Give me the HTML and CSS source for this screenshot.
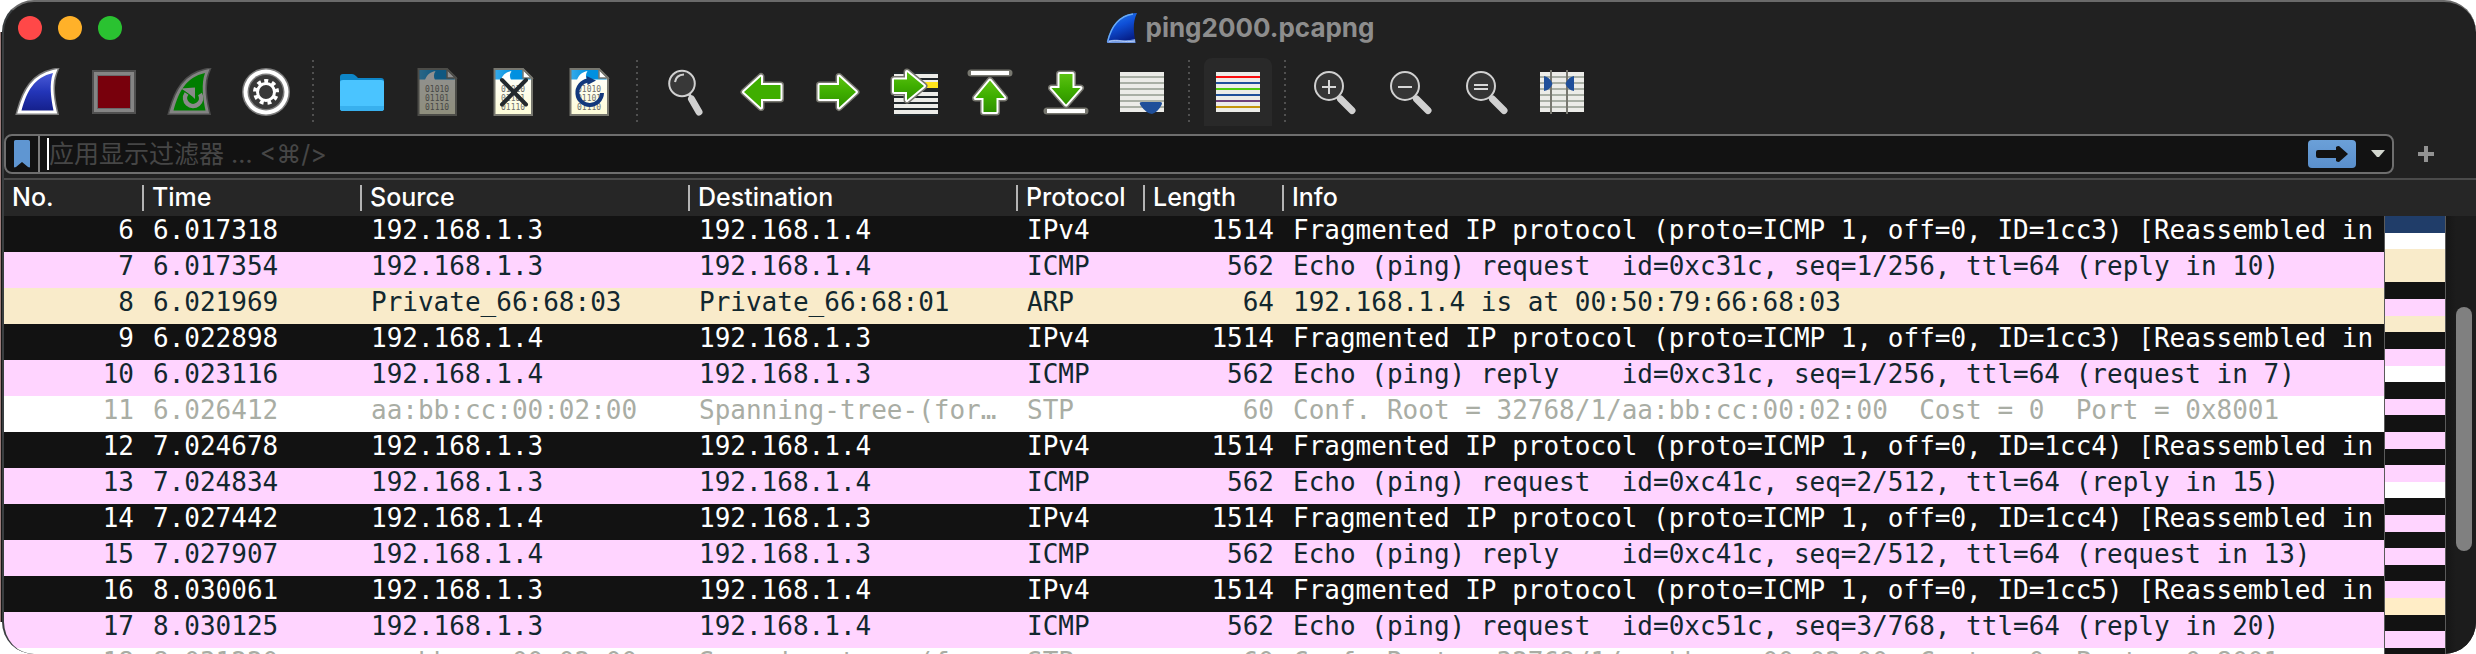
FILE: index.html
```
<!DOCTYPE html>
<html lang="zh-CN">
<head>
<meta charset="utf-8">
<title>ping2000.pcapng</title>
<link rel="stylesheet" href="styles.css">
</head>
<body>
<svg class="defs" width="0" height="0" aria-hidden="true">
  <defs>
    <linearGradient id="blueFin" x1="0" y1="0" x2="0" y2="1"><stop offset="0" stop-color="#4a5bd8"/><stop offset=".5" stop-color="#2335b8"/><stop offset="1" stop-color="#15208c"/></linearGradient>
    <linearGradient id="titleFin" x1="0" y1="0" x2=".4" y2="1"><stop offset="0" stop-color="#2a86f0"/><stop offset=".5" stop-color="#0f50d8"/><stop offset="1" stop-color="#06208a"/></linearGradient>
    <linearGradient id="greenArrow" x1="0" y1="0" x2="0" y2="1"><stop offset="0" stop-color="#5cc212"/><stop offset=".5" stop-color="#3fae00"/><stop offset="1" stop-color="#2f9200"/></linearGradient>
    <linearGradient id="paper" x1="0" y1="0" x2="0" y2="1"><stop offset="0" stop-color="#fff"/><stop offset="1" stop-color="#fdfcd8"/></linearGradient>
    <linearGradient id="sky" x1="0" y1="0" x2="1" y2="0"><stop offset="0" stop-color="#36aaea"/><stop offset=".5" stop-color="#0090e0"/><stop offset="1" stop-color="#0090e0"/></linearGradient>
    <g id="fin"><path d="M6.500 43C12 23 20 9 39.500 4.500C35 16 37 30 40 43z"/></g>
    <g id="file">
      <path d="M5.500 1H34L43 10V47H5.500z" fill="url(#paper)"/>
      <path d="M6 1H34L42 11.500H6z" fill="url(#sky)"/>
      <path d="M12 12C13.500 7 17 4 22.500 3C20.500 6 20.500 9 22 12z" fill="#fff"/>
      <path d="M34 1V10H43z" fill="#fff" stroke="#77776f" stroke-width="1.500"/>
      <path d="M5.500 1H34L43 10V47H5.500z" fill="none" stroke="#77776f" stroke-width="2"/>
      <g class="bits"><text x="12" y="24">01010</text><text x="12" y="33">01101</text><text x="12" y="42">01110</text></g>
    </g>
    <path id="arrow" d="M5.500 17H25V8.500L42 24L25 39.500V31H5.500z"/>
    <g id="lens">
      <path d="M30.500 31L42 42.500" stroke="#d0d0d0" stroke-width="7" stroke-linecap="round"/>
      <circle cx="19" cy="18" r="14" fill="#353535" stroke="#d0d0d0" stroke-width="2"/>
    </g>
  </defs>
</svg>

<main class="window">
  <header class="titlebar">
    <div class="lights">
      <button class="light light-close" aria-label="关闭"></button>
      <button class="light light-min" aria-label="最小化"></button>
      <button class="light light-max" aria-label="缩放"></button>
    </div>
    <h1 class="title">
      <svg width="32" height="32" viewBox="0 0 32 32" aria-hidden="true"><path d="M1 31C4 15 13 2 31 1C26 11 28 21 29.500 31z" fill="url(#titleFin)"/><path d="M1.500 30C5 15 13 4 27 2" fill="none" stroke="#67a9f5" stroke-width="1.500"/><path d="M1 31L2 28.500C10 26 18 30 29 27L29.500 31z" fill="#6f97e0"/><path d="M3 29.500C12 27 18 31 29 29" fill="none" stroke="#b5cbf5"/></svg>
      <span>ping2000.pcapng</span>
    </h1>
    <div class="title-end"></div>
  </header>

  <nav class="toolbar" aria-label="主工具栏">
    <button class="tool" aria-label="开始捕获"><svg viewBox="0 0 48 48"><use href="#fin" fill="none" stroke="#7c7c7c" stroke-width="8"/><use href="#fin" fill="url(#blueFin)" stroke="#fff" stroke-width="5"/><path d="M7.500 42.500C13 23 20 9.500 39 5C35 16 37 30 39.500 42.500z" fill="url(#blueFin)"/></svg></button>
    <button class="tool" aria-label="停止捕获"><svg viewBox="0 0 48 48"><path fill="#505050" d="M2 2h44v44H2z"/><path fill="#858585" d="M4 4h40v40H4z"/><path fill="#69696b" d="M7 7h34v34H7z"/><path fill="#78000c" d="M8 8h32v32H8z"/></svg></button>
    <button class="tool" aria-label="重新开始捕获"><svg viewBox="0 0 48 48"><use href="#fin" fill="none" stroke="#4c4c4c" stroke-width="8"/><use href="#fin" fill="none" stroke="#838383" stroke-width="5"/><path d="M7.500 42.500C13 23 20 9.500 39 5C35 16 37 30 39.500 42.500z" fill="#007d00"/><path d="M20.500 25.500A8 8 0 1 0 34 26" fill="none" stroke="#8a8a8a" stroke-width="4.500"/><path d="M15 20.500L29 19.500V31C26 28 21 24 15 20.500z" fill="#8a8a8a"/></svg></button>
    <button class="tool" aria-label="捕获选项"><svg viewBox="0 0 48 48"><circle cx="24" cy="24" r="24" fill="#7c7c7c"/><circle cx="24" cy="24" r="22.500" fill="#fff"/><circle cx="24" cy="24" r="18.500" fill="#7c7c7c"/><circle cx="24" cy="24" r="17" fill="#383838"/><circle cx="24" cy="24" r="11" fill="none" stroke="#fff" stroke-width="4" stroke-dasharray="3.840" transform="rotate(-99 24 24)"/><circle cx="24" cy="24" r="8.500" fill="none" stroke="#fff" stroke-width="3"/></svg></button>
    <span class="divider"></span>
    <button class="tool" aria-label="打开"><svg viewBox="0 0 48 48"><path d="M2 40V9Q2 6 5 6H14Q16 6 18 8L20 10H43Q46 10 46 13V40Q46 43 43 43H5Q2 43 2 40z" fill="#0e86c8"/><path d="M2 14Q2 12 5 12H43Q46 12 46 14V40Q46 43 43 43H5Q2 43 2 40z" fill="#4ac4ff"/><path d="M2 38H46V40Q46 43 43 43H5Q2 43 2 40z" fill="#38b0ee"/></svg></button>
    <button class="tool" aria-label="保存" disabled><svg viewBox="1 0 48 48"><use href="#file"/></svg></button>
    <button class="tool" aria-label="关闭文件"><svg viewBox="1 0 48 48"><use href="#file"/><path d="M13 12L37 36.500M37 12L13 36.500" stroke="#23292d" stroke-width="4" stroke-linecap="round"/></svg></button>
    <button class="tool" aria-label="重新加载"><svg viewBox="1 0 48 48"><use href="#file"/><path d="M23 12.500A12.300 12.300 0 1 0 37 25" fill="none" stroke="#12387c" stroke-width="4"/><path d="M21.500 8L31 12.500L22.500 17z" fill="#12387c"/></svg></button>
    <span class="divider"></span>
    <button class="tool" aria-label="查找"><svg viewBox="0 0 48 48"><path d="M29.500 31L37 44" stroke="#d0d0d0" stroke-width="7" stroke-linecap="round"/><path d="M27 26L30 31" stroke="#d0d0d0" stroke-width="3"/><circle cx="20" cy="15.500" r="12.800" fill="#383838" stroke="#d0d0d0" stroke-width="2"/><path d="M13 14Q14 7 22 6.500" fill="none" stroke="#d0d0d0" stroke-width="2"/></svg></button>
    <button class="tool" aria-label="后退"><svg viewBox="0 0 48 48" class="arrow"><g transform="rotate(180 24 24)"><use href="#arrow" class="edge"/><use href="#arrow" class="rim"/><use href="#arrow" fill="#3fae00"/></g></svg></button>
    <button class="tool" aria-label="前进"><svg viewBox="0 0 48 48" class="arrow"><use href="#arrow" class="edge"/><use href="#arrow" class="rim"/><use href="#arrow" fill="url(#greenArrow)"/></svg></button>
    <button class="tool" aria-label="转到分组"><svg viewBox="0 0 48 48"><path fill="#20272a" d="M4 4h44v44H4z"/><path fill="#ecece8" d="M4 6h44v4H4zM4 12h44v4H4zM4 24h44v4H4zM4 30h44v4H4zM4 36h44v4H4zM4 42h44v4H4z"/><path fill="#ffe41c" d="M34 14h14v6H34z"/><g class="arrow"><path class="edge" d="M4 11.500H17V4L34 18L17 32V24H4z"/><path class="rim" d="M4 11.500H17V4L34 18L17 32V24H4z"/><path fill="url(#greenArrow)" d="M4 11.500H17V4L34 18L17 32V24H4z"/></g></svg></button>
    <button class="tool" aria-label="第一个分组"><svg viewBox="0 0 48 48" class="arrow"><path d="M5 5H43" stroke="#77776f" stroke-width="7" stroke-linecap="round"/><path d="M5 5H43" stroke="#fff" stroke-width="4"/><path class="edge" d="M24 12.500L38.500 30H30.500V44H17.500V30H9.500z"/><path class="rim" d="M24 12.500L38.500 30H30.500V44H17.500V30H9.500z"/><path fill="url(#greenArrow)" d="M24 12.500L38.500 30H30.500V44H17.500V30H9.500z"/></svg></button>
    <button class="tool" aria-label="最新分组"><svg viewBox="0 0 48 48" class="arrow"><path d="M5 43H43" stroke="#77776f" stroke-width="7" stroke-linecap="round"/><path d="M5 43H43" stroke="#fff" stroke-width="4"/><path class="edge" d="M24 36.500L38.500 20H30.500V6H17.500V20H9.500z"/><path class="rim" d="M24 36.500L38.500 20H30.500V6H17.500V20H9.500z"/><path fill="url(#greenArrow)" d="M24 36.500L38.500 20H30.500V6H17.500V20H9.500z"/></svg></button>
    <button class="tool" aria-label="自动滚动"><svg viewBox="0 0 48 48"><path fill="#ecece8" d="M2 4h44v40H2z"/><path fill="#a9afa5" d="M2 8h44v2H2zM2 14h44v2H2zM2 20h44v2H2zM2 26h44v2H2zM2 32h44v2H2zM2 38h44v2H2z"/><path fill="#1f4f9a" d="M24 34H42Q45 34 43.500 37Q40 44 34 46Q28 45 23 38Q20 34 24 34z"/></svg></button>
    <span class="divider"></span>
    <button class="tool tool-on" aria-label="着色规则" aria-pressed="true"><svg viewBox="0 0 48 48"><path fill="#ecece8" d="M2 4h44v40H2z"/><path fill="#fb0d0d" d="M2 8h44v2H2z"/><path fill="#1f4f9a" d="M2 14h44v2H2zM2 26h44v2H2z"/><path fill="#4ccc0a" d="M2 20h44v2H2z"/><path fill="#6e3f78" d="M2 32h44v2H2z"/><path fill="#c4940a" d="M2 38h44v2H2z"/></svg></button>
    <span class="divider"></span>
    <button class="tool" aria-label="放大"><svg viewBox="0 0 48 48"><use href="#lens"/><path d="M12 19h14M19 12v14" stroke="#d8d8d8" stroke-width="2"/></svg></button>
    <button class="tool" aria-label="缩小"><svg viewBox="0 0 48 48"><use href="#lens"/><path d="M12 19h14" stroke="#d8d8d8" stroke-width="2"/></svg></button>
    <button class="tool" aria-label="正常大小"><svg viewBox="0 0 48 48"><use href="#lens"/><path d="M12 17h14M12 21h14" stroke="#d8d8d8" stroke-width="2"/></svg></button>
    <button class="tool" aria-label="调整列宽"><svg viewBox="0 0 48 48"><path fill="#ecece8" d="M2 4h44v40H2z"/><path fill="#a9afa5" d="M2 8h44v2H2zM2 14h44v2H2zM2 20h44v2H2zM2 26h44v2H2zM2 32h44v2H2zM2 38h44v2H2z"/><path fill="#77776f" d="M12 2h2v44h-2zM28 2h2v44h-2z"/><path fill="#1f4f9a" d="M6 8Q12 9 14.500 16Q12 22 6 23zM36 8Q30 9 27.500 16Q30 22 36 23z"/></svg></button>
  </nav>

  <form class="filter">
    <div class="filter-box">
      <button type="button" class="bookmark" aria-label="书签"><svg width="16" height="28" viewBox="0 0 16 28"><path d="M0 1.500Q0 0 1.500 0H14.500Q16 0 16 1.500V26.500Q16 28 14 27L8 22L2 27Q0 28 0 26.500z" fill="#5f96d2"/></svg></button>
      <input class="filter-input" type="text" aria-label="显示过滤器" placeholder="应用显示过滤器 … &lt;⌘/&gt;">
      <button type="button" class="apply" aria-label="应用"><svg width="32" height="16" viewBox="0 0 32 16"><path d="M2 4H20V1Q21 0 23 0L32 8L23 16Q21 16 20 15V12H2Q0 12 0 10V6Q0 4 2 4z" fill="#121212"/></svg></button>
      <button type="button" class="history" aria-label="历史"><svg width="14" height="8" viewBox="0 0 14 8"><path d="M0 0H14L8 7H6z" fill="#d3d7cf"/></svg></button>
    </div>
    <button type="button" class="add" aria-label="添加过滤器"><svg width="16" height="16" viewBox="0 0 16 16"><path d="M6 0h4v6h6v4h-6v6H6v-6H0V6h6z" fill="#929292"/></svg></button>
  </form>

  <section class="packets">
    <table class="list">
      <colgroup><col class="c-no"><col class="c-time"><col class="c-addr"><col class="c-addr"><col class="c-proto"><col class="c-len"><col></colgroup>
      <thead>
        <tr><th>No.</th><th>Time</th><th>Source</th><th>Destination</th><th>Protocol</th><th>Length</th><th>Info</th></tr>
      </thead>
      <tbody>
        <tr class="frag"><td class="num">6</td><td>6.017318</td><td>192.168.1.3</td><td>192.168.1.4</td><td>IPv4</td><td class="num">1514</td><td>Fragmented IP protocol (proto=ICMP 1, off=0, ID=1cc3) [Reassembled in</td></tr>
        <tr class="icmp"><td class="num">7</td><td>6.017354</td><td>192.168.1.3</td><td>192.168.1.4</td><td>ICMP</td><td class="num">562</td><td>Echo (ping) request  id=0xc31c, seq=1/256, ttl=64 (reply in 10)</td></tr>
        <tr class="arp"><td class="num">8</td><td>6.021969</td><td>Private_66:68:03</td><td>Private_66:68:01</td><td>ARP</td><td class="num">64</td><td>192.168.1.4 is at 00:50:79:66:68:03</td></tr>
        <tr class="frag"><td class="num">9</td><td>6.022898</td><td>192.168.1.4</td><td>192.168.1.3</td><td>IPv4</td><td class="num">1514</td><td>Fragmented IP protocol (proto=ICMP 1, off=0, ID=1cc3) [Reassembled in</td></tr>
        <tr class="icmp"><td class="num">10</td><td>6.023116</td><td>192.168.1.4</td><td>192.168.1.3</td><td>ICMP</td><td class="num">562</td><td>Echo (ping) reply    id=0xc31c, seq=1/256, ttl=64 (request in 7)</td></tr>
        <tr class="stp"><td class="num">11</td><td>6.026412</td><td>aa:bb:cc:00:02:00</td><td>Spanning-tree-(for…</td><td>STP</td><td class="num">60</td><td>Conf. Root = 32768/1/aa:bb:cc:00:02:00  Cost = 0  Port = 0x8001</td></tr>
        <tr class="frag"><td class="num">12</td><td>7.024678</td><td>192.168.1.3</td><td>192.168.1.4</td><td>IPv4</td><td class="num">1514</td><td>Fragmented IP protocol (proto=ICMP 1, off=0, ID=1cc4) [Reassembled in</td></tr>
        <tr class="icmp"><td class="num">13</td><td>7.024834</td><td>192.168.1.3</td><td>192.168.1.4</td><td>ICMP</td><td class="num">562</td><td>Echo (ping) request  id=0xc41c, seq=2/512, ttl=64 (reply in 15)</td></tr>
        <tr class="frag"><td class="num">14</td><td>7.027442</td><td>192.168.1.4</td><td>192.168.1.3</td><td>IPv4</td><td class="num">1514</td><td>Fragmented IP protocol (proto=ICMP 1, off=0, ID=1cc4) [Reassembled in</td></tr>
        <tr class="icmp"><td class="num">15</td><td>7.027907</td><td>192.168.1.4</td><td>192.168.1.3</td><td>ICMP</td><td class="num">562</td><td>Echo (ping) reply    id=0xc41c, seq=2/512, ttl=64 (request in 13)</td></tr>
        <tr class="frag"><td class="num">16</td><td>8.030061</td><td>192.168.1.3</td><td>192.168.1.4</td><td>IPv4</td><td class="num">1514</td><td>Fragmented IP protocol (proto=ICMP 1, off=0, ID=1cc5) [Reassembled in</td></tr>
        <tr class="icmp"><td class="num">17</td><td>8.030125</td><td>192.168.1.3</td><td>192.168.1.4</td><td>ICMP</td><td class="num">562</td><td>Echo (ping) request  id=0xc51c, seq=3/768, ttl=64 (reply in 20)</td></tr>
        <tr class="stp"><td class="num">18</td><td>8.031220</td><td>aa:bb:cc:00:02:00</td><td>Spanning-tree-(for…</td><td>STP</td><td class="num">60</td><td>Conf. Root = 32768/1/aa:bb:cc:00:02:00  Cost = 0  Port = 0x8001</td></tr>
      </tbody>
    </table>
    <div class="side">
      <div class="side-head"></div>
      <div class="minimap" aria-hidden="true">
        <i class="m-sel"></i><i class="stp"></i><i class="arp m-two"></i><i class="frag"></i><i class="icmp"></i><i class="arp"></i><i class="frag"></i><i class="icmp"></i><i class="stp"></i><i class="frag"></i><i class="icmp"></i><i class="frag"></i><i class="icmp"></i><i class="frag"></i><i class="icmp"></i><i class="stp"></i><i class="frag"></i><i class="icmp"></i><i class="frag"></i><i class="icmp"></i><i class="frag"></i><i class="icmp"></i><i class="m-mark"></i><i class="frag"></i><i class="icmp"></i><i class="frag m-last"></i>
      </div>
      <div class="scrollbar"><div class="thumb"></div></div>
    </div>
  </section>
</main>
</body>
</html>
```
FILE: styles.css
```
* { box-sizing: border-box; }

body {
  margin: 0;
  padding-left: 2px;
  height: 100vh;
  overflow: hidden;
  background: linear-gradient(90deg, #9c7d7c 1px, #161616 1px) 0 32px / 2px calc(100% - 64px) no-repeat #fff;
  font-family: Inter, "Noto Sans CJK SC", sans-serif;
  font-size: 26px;
}

button {
  padding: 0;
  border: 0;
  background: none;
  font: inherit;
}

svg { display: block; }
.defs { position: absolute; }

.window {
  display: flex;
  flex-direction: column;
  height: 100%;
  overflow: hidden;
  border-top: 2px solid #6a6a6a;
  border-left: 2px solid #3a3e40;
  border-radius: 32px;
  background: #212121;
}

/* Title bar */
.titlebar {
  display: grid;
  grid-template-columns: 1fr auto 1fr;
  align-items: center;
  flex: none;
  height: 52px;
  margin-bottom: 4px;
}
.lights {
  display: flex;
  gap: 16px;
  padding-left: 14px;
}
.light {
  width: 24px;
  height: 24px;
  border-radius: 50%;
}
.light-close { background: #ff4848; }
.light-min { background: #ffb129; }
.light-max { background: #2ac231; }
.title {
  display: flex;
  align-items: center;
  gap: 8px;
  margin: 0;
  color: #8d8d8d;
  font-size: 26px;
  font-weight: 700;
  line-height: 32px;
}

/* Toolbar */
.toolbar {
  display: flex;
  flex: none;
  gap: 8px;
  height: 76px;
}
.tool {
  display: grid;
  place-items: center;
  flex: none;
  width: 68px;
  height: 68px;
}
.tool svg {
  width: 48px;
  height: 48px;
}
.tool:disabled svg { opacity: .5; }
.tool-on {
  border-radius: 8px 8px 0 0;
  background: #292929;
}
.divider {
  flex: none;
  width: 12px;
  height: 64px;
  margin-top: 2px;
  background: repeating-linear-gradient(#505050 0 2px, transparent 2px 6px) 4px 0 / 2px 100% no-repeat;
}
.bits {
  fill: #6f6f6b;
  font: 8px "DejaVu Sans Mono", monospace;
}
.arrow { stroke-linejoin: round; }
.edge {
  fill: none;
  stroke: #77776f;
  stroke-width: 7px;
}
.rim {
  fill: none;
  stroke: #fff;
  stroke-width: 4px;
}

/* Display filter */
.filter {
  display: flex;
  flex: none;
  align-items: center;
  height: 40px;
  margin-bottom: 4px;
}
.filter-box {
  display: flex;
  align-items: center;
  flex: 1;
  height: 40px;
  border: 2px solid #6e6e6e;
  border-radius: 8px;
  background: #121212;
}
.bookmark {
  display: grid;
  place-items: center;
  width: 34px;
  height: 36px;
  border-right: 2px solid #7c7c7c;
}
.filter-input {
  flex: 1;
  min-width: 0;
  height: 32px;
  margin-left: 7px;
  padding: 0;
  border: 0;
  border-left: 2px solid #fff;
  outline: 0;
  background: none;
  color: #fff;
  font: 25px Inter, "Noto Sans CJK SC", "DejaVu Sans", sans-serif;
}
.filter-input::placeholder {
  color: #464646;
  opacity: 1;
}
.apply {
  display: grid;
  place-items: center;
  width: 48px;
  height: 28px;
  border-radius: 4px;
  background: linear-gradient(#6ba0d8, #5a8fcc);
}
.history {
  display: grid;
  place-items: center;
  width: 36px;
  height: 28px;
  padding-left: 8px;
}
.add {
  display: grid;
  place-items: center;
  width: 64px;
  height: 40px;
  margin-right: 18px;
}

/* Packet list */
.packets {
  display: flex;
  flex: 1;
  min-height: 0;
  border-top: 2px solid #4b4b4b;
  overflow: hidden;
}
.list {
  flex: 1;
  width: 0;
  align-self: flex-start;
  border-collapse: collapse;
  table-layout: fixed;
}
.c-no { width: 140px; }
.c-time { width: 218px; }
.c-addr { width: 328px; }
.c-proto { width: 127px; }
.c-len { width: 139px; }

th {
  height: 36px;
  padding: 0 10px 2px 8px;
  background: linear-gradient(#b4b4b4, #b4b4b4) right 5px / 2px 26px no-repeat #262626;
  color: #fff;
  font-weight: 500;
  font-size: 25px;
  line-height: 34px;
  text-align: left;
  white-space: nowrap;
}
th:last-child { background: #262626; }
td {
  height: 36px;
  padding: 0 10px 8px 9px;
  overflow: hidden;
  font: 26px/28px "DejaVu Sans Mono", monospace;
  white-space: pre;
}
td:last-child { padding-right: 0; }
.num { text-align: right; }

.frag { background: #121212; color: #fff; }
.icmp { background: #ffd4ff; color: #12272e; }
.arp { background: #f9ebca; color: #12272e; }
.stp { background: #fff; color: #a9ada4; }

.side {
  display: grid;
  grid-template-columns: 62px 30px;
  grid-template-rows: 36px 1fr;
  flex: none;
}
.side-head {
  grid-column: 1 / -1;
  background: #262626;
}
.minimap {
  display: flex;
  flex-direction: column;
  border: solid #5a5a5a;
  border-width: 0 1px;
}
.minimap i { flex: 1; }
.minimap .m-two { flex: 2; }
.minimap .m-last { flex: none; height: 6px; }
.m-sel { background: #203d69; }
.m-mark { background: #ffedc6; }
.scrollbar {
  padding: 91px 4px 0 10px;
  background: linear-gradient(90deg, #161616, #1c1c1c 10px);
}
.thumb {
  height: 244px;
  border-radius: 8px;
  background: #808080;
}
```
